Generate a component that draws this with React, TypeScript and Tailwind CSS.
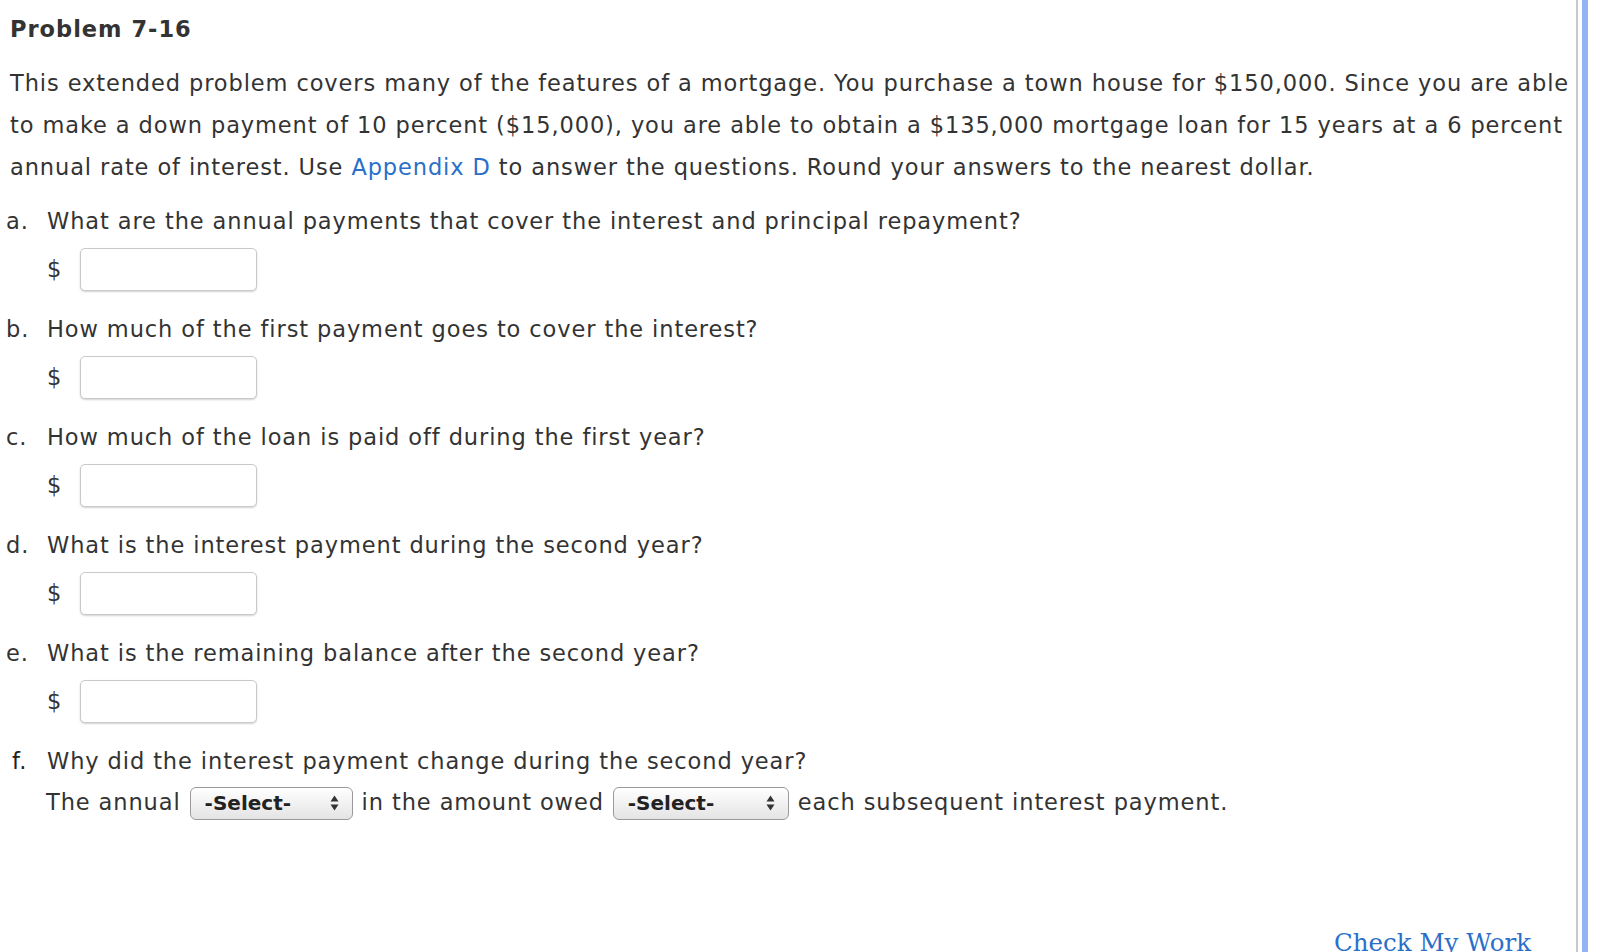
import React from 'react'

const verdana = { fontFamily: '"DejaVu Sans", Verdana, sans-serif' }

function Arrows() {
  return (
    <svg width="9" height="16" viewBox="0 0 9 16" className="shrink-0">
      <path d="M4.5 0.5 L8.5 6.5 L0.5 6.5 Z" fill="#333" />
      <path d="M4.5 15.5 L8.5 9.5 L0.5 9.5 Z" fill="#333" />
    </svg>
  )
}

function SelectBox({ width }: { width: string }) {
  return (
    <div
      className={`${width} h-[33px] inline-flex items-center justify-between pl-[14px] pr-[13px] rounded-[6px] border border-[#9a9a9a] bg-gradient-to-b from-white to-[#e4e4e4] shadow-[inset_0_1px_0_white] tracking-normal`}
    >
      <span className="font-bold text-[20px] text-[#222]">-Select-</span>
      <Arrows />
    </div>
  )
}

function Question({ letter, text }: { letter: string; text: string }) {
  return (
    <div className="mb-[17px]">
      <div className="flex h-[42px] items-center pt-[2px]">
        <span className="w-[47px] pl-[6px] shrink-0">{letter}</span>
        <span>{text}</span>
      </div>
      <div className="flex items-center mt-[6px] h-[43px]">
        <span className="ml-[47px] w-[33px]">$</span>
        <div className="w-[177px] h-[43px] rounded-[5px] border border-[#c9c9c9] bg-white shadow-[0_1px_2px_rgba(0,0,0,0.18)]" />
      </div>
    </div>
  )
}

export default function App() {
  return (
    <div className="w-[1608px] h-[952px] bg-white flex overflow-hidden text-[#333]" style={verdana}>
      <div className="w-[1576px] shrink-0 text-[22.5px] tracking-[0.9px]">
        <h1 className="pl-[10px] pt-[12px] h-[50px] font-bold text-[22.5px] tracking-[1px] leading-[34px]">Problem 7-16</h1>
        <p className="pl-[10px] pt-[12px] leading-[42px] whitespace-nowrap">
          This extended problem covers many of the features of a mortgage. You purchase a town house for $150,000. Since you are able
          <br />
          to make a down payment of 10 percent ($15,000), you are able to obtain a $135,000 mortgage loan for 15 years at a 6 percent
          <br />
          annual rate of interest. Use <span className="text-[#2a6fc9]">Appendix D</span> to answer the questions. Round your answers to the nearest dollar.
        </p>
        <div className="pt-[12px]">
          <Question letter="a." text="What are the annual payments that cover the interest and principal repayment?" />
          <Question letter="b." text="How much of the first payment goes to cover the interest?" />
          <Question letter="c." text="How much of the loan is paid off during the first year?" />
          <Question letter="d." text="What is the interest payment during the second year?" />
          <Question letter="e." text="What is the remaining balance after the second year?" />
          <div>
            <div className="flex h-[42px] items-center pt-[2px]">
              <span className="w-[47px] pl-[12px] shrink-0 text-[#222]">f.</span>
              <span>Why did the interest payment change during the second year?</span>
            </div>
            <div className="flex items-center h-[42px] pl-[46px] gap-[9px] whitespace-nowrap">
              <span>The annual</span>
              <SelectBox width="w-[163px]" />
              <span>in the amount owed</span>
              <SelectBox width="w-[176px]" />
              <span>each subsequent interest payment.</span>
            </div>
          </div>
          <div className="flex justify-end pr-[45px] mt-[104px]">
            <span className="text-[24.5px] text-[#2a6fc9] tracking-normal leading-[30px]" style={{ fontFamily: '"DejaVu Serif", Georgia, serif' }}>
              Check My Work
            </span>
          </div>
        </div>
      </div>
      <div className="w-[2px] bg-[#c9c9c9] shrink-0" />
      <div className="w-[4px] shrink-0" />
      <div className="w-[6px] bg-[#93b4f4] shrink-0" />
    </div>
  )
}
